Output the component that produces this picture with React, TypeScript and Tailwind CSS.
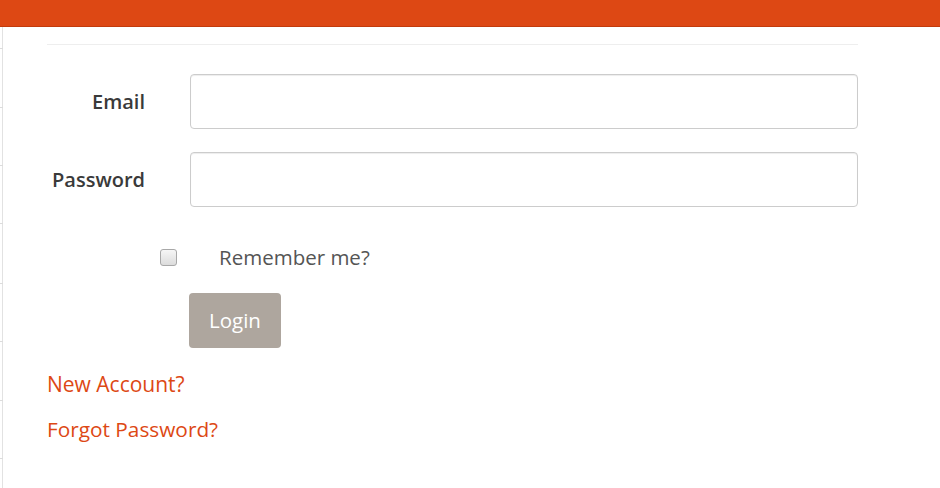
import React from "react";

export default function App() {
  const ticks = [48, 107, 165, 223, 283, 341, 400, 458];
  return (
    <div className="relative w-[940px] h-[488px] bg-white overflow-hidden" style={{ fontFamily: '"Open Sans", "Noto Sans", sans-serif' }}>
      <div className="h-[27px] bg-[#dd4814] border-b border-[#c23b0c]" />
      <div className="absolute left-[2px] top-[27px] bottom-0 w-px bg-[#e2e2e2]" />
      {ticks.map((t) => (
        <div key={t} className="absolute left-0 w-[3px] h-px bg-[#dcdcdc]" style={{ top: t }} />
      ))}
      <div className="ml-[47px] w-[811px]">
        <div className="mt-[17px] h-px bg-[#eeeeee]" />
        <div className="mt-[29px] flex items-center h-[55px]">
          <label className="w-[143px] pr-[45px] text-right text-[20px] font-semibold text-[#3a3a3a]">Email</label>
          <div className="flex-1 h-[55px] border border-[#cccccc] rounded-[4px] shadow-[inset_0_1px_1px_rgba(0,0,0,0.075)]" />
        </div>
        <div className="mt-[23px] flex items-center h-[55px]">
          <label className="w-[143px] pr-[45px] text-right text-[20px] font-semibold text-[#3a3a3a]">Password</label>
          <div className="flex-1 h-[55px] border border-[#cccccc] rounded-[4px] shadow-[inset_0_1px_1px_rgba(0,0,0,0.075)]" />
        </div>
        <div className="mt-[37px] flex items-center h-[26px]">
          <div className="ml-[113px] w-[17px] h-[17px] rounded-[3px] border border-[#a8a8a8] bg-gradient-to-b from-[#f6f6f6] to-[#dcdcdc]" />
          <span className="ml-[42px] text-[20.5px] text-[#555]">Remember me?</span>
        </div>
        <div className="mt-[23px] ml-[142px]">
          <button className="w-[92px] h-[55px] rounded-[4px] bg-[#aea69e] text-white text-[20.5px]">Login</button>
        </div>
        <div className="mt-[22px] text-[21px] text-[#dd4814] leading-[28px]">New Account?</div>
        <div className="mt-[17px] text-[20.8px] text-[#dd4814] leading-[28px]">Forgot Password?</div>
      </div>
    </div>
  );
}
